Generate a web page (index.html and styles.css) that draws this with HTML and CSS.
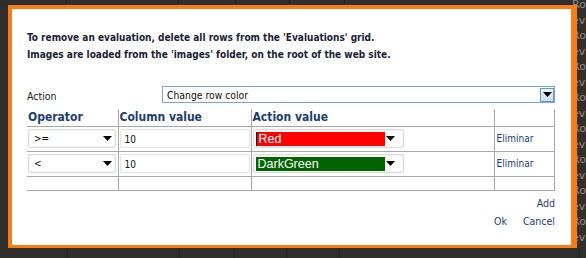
FILE: index.html
```html
<!DOCTYPE html>
<html>
<head>
<meta charset="utf-8">
<link rel="stylesheet" href="styles.css">
</head>
<body>
<div class="bg">
  <div class="bg-row top">
    <span class="bc c1"></span><span class="bc c2"></span><span class="bc c3"></span><span class="bc c4"></span><span class="bc c5"></span><span class="bc c6"></span>
  </div>
  <div class="bg-side">
    <div>Row</div><div>eva</div><div>Row</div><div>eva</div><div>Row</div><div>eva</div><div>Row</div><div>eva</div><div>Row</div><div>eva</div><div>Row</div><div>eva</div><div>Row</div><div>eva</div><div>Row</div><div>eva</div>
  </div>
  <div class="bg-row bottom">
    <span class="bc c1"></span><span class="bc c2"></span><span class="bc c3"></span><span class="bc c4"></span><span class="bc c5"></span><span class="bc c6"></span>
  </div>
</div>

<div class="dialog">
  <p class="note">To remove an evaluation, delete all rows from the 'Evaluations' grid.</p>
  <p class="note">Images are loaded from the 'images' folder, on the root of the web site.</p>

  <div class="action-row">
    <span class="label">Action</span>
    <div class="select big">
      <span class="val">Change row color</span>
      <span class="btn"><svg width="9" height="5" viewBox="0 0 9 5"><path d="M0 0H9L4.5 5Z" fill="#000"/></svg></span>
    </div>
  </div>

  <table class="grid">
    <colgroup><col class="w1"><col class="w2"><col class="w3"><col class="w4"></colgroup>
    <tr class="head"><th>Operator</th><th>Column value</th><th>Action value</th><th></th></tr>
    <tr>
      <td><div class="dd op"><span>&gt;=</span><svg width="9" height="5" viewBox="0 0 9 5"><path d="M0 0H9L4.5 5Z" fill="#000"/></svg></div></td>
      <td><div class="inp">10</div></td>
      <td><div class="dd av"><span class="sw red">Red</span><svg width="9" height="5" viewBox="0 0 9 5"><path d="M0 0H9L4.5 5Z" fill="#000"/></svg></div></td>
      <td class="del">Eliminar</td>
    </tr>
    <tr>
      <td><div class="dd op"><span>&lt;</span><svg width="9" height="5" viewBox="0 0 9 5"><path d="M0 0H9L4.5 5Z" fill="#000"/></svg></div></td>
      <td><div class="inp">10</div></td>
      <td><div class="dd av"><span class="sw green">DarkGreen</span><svg width="9" height="5" viewBox="0 0 9 5"><path d="M0 0H9L4.5 5Z" fill="#000"/></svg></div></td>
      <td class="del">Eliminar</td>
    </tr>
    <tr class="empty"><td></td><td></td><td></td><td></td></tr>
  </table>

  <div class="links add"><a>Add</a></div>
  <div class="links"><a>Ok</a><a>Cancel</a></div>
</div>
</body>
</html>
```

FILE: styles.css
```css
html, body { margin: 0; padding: 0; }
body {
  width: 586px; height: 258px; overflow: hidden;
  background: #2f2f2e;
  font-family: "DejaVu Sans Condensed", "DejaVu Sans", sans-serif;
  position: relative;
}
.bg { position: absolute; inset: 0; }
.bg-row { display: flex; }
.bg-row.top { position: absolute; top: 0; left: 0; right: 0; height: 5px; }
.bg-row.bottom { position: absolute; bottom: 0; left: 0; right: 0; height: 10px; }
.bc { border-right: 1px solid #222; box-sizing: border-box; }
.bg-row.top .bc { border-bottom: 1px solid #262626; border-radius: 0 0 3px 3px; margin-right: 3px; }
.c1 { width: 68px; } .c2 { width: 112px; } .c3 { width: 55px; } .c4 { width: 52px; } .c5 { width: 53px; } .c6 { width: 240px; }
.bg-side {
  position: absolute; left: 572px; top: -3px; white-space: nowrap;
  color: #8a8a8a; font-family: "DejaVu Sans", sans-serif; font-size: 11px; line-height: 15.5px;
}

.dialog {
  position: absolute; left: 8px; top: 5px;
  width: 528px; height: 236px;
  background: #fff;
  border: 4px solid #ff7a10; border-right-width: 6px; border-bottom-width: 3px;
  padding: 0 16px 0 15px;
  color: #1b2236;
}
.note {
  margin: 0; font-weight: bold; font-size: 10px; line-height: 17px;
}
.note:first-child { margin-top: 20px; }
.action-row { display: flex; align-items: center; margin-top: 23px; height: 17px; }
.label { font-size: 10.5px; width: 135px; color: #222; padding-top: 2px; }
.select.big {
  flex: 1; height: 15px; border: 1px solid #7fa5c7; display: flex; align-items: center; justify-content: space-between;
  font-size: 10.3px; color: #111;
}
.select .val { padding-left: 4px; }
.select .btn {
  width: 14px; height: 14px; background: linear-gradient(#eaf3fb, #c7dcef);
  display: flex; align-items: center; justify-content: center; box-sizing: border-box; border: 1px solid #6b97c1;
}
.grid {
  border-collapse: collapse; width: 527px; margin-top: 6px; table-layout: fixed;
}
.grid td, .grid th { border: 1px solid #a8a8a8; padding: 0; }
.grid tr:first-child th { border-top: none; }
.grid th:first-child, .grid td:first-child { border-left: none; }
.w1 { width: 91px; } .w2 { width: 133px; } .w3 { width: 243px; } .w4 { width: 60px; }
.head th {
  height: 16px; text-align: left; font-size: 12px; color: #1c3d6e; padding-left: 1px; font-weight: bold;
  line-height: 15px;
}
.grid tr { height: 25px; }
.grid tr.head { height: 17px; }
.grid tr.empty { height: 14px; }
.dd {
  display: flex; align-items: center; justify-content: space-between;
  height: 19px; border: 1px solid #dcdcdc; border-radius: 2px; box-sizing: border-box;
  box-shadow: inset 0 0 0 1px #f4f4f4;
}
.dd.op { margin: 0 2px 0 1px; padding: 0 3px 0 5px; font-size: 10px; color: #111; }
.dd.av { width: 151px; margin-left: 1px; padding: 0 8px 0 2px; }
.sw { display: block; width: 129px; height: 14px; line-height: 14px; font-family: "Liberation Sans", Arial, sans-serif; font-size: 12.5px; color: #fff; padding-left: 2px; box-sizing: border-box; }
.sw.red { background: #ff0000; border-left: 1px solid #000; }
.sw.green { background: #006400; }
.inp { height: 19px; margin: 0 1px; padding-left: 4px; line-height: 19px; font-size: 10px; color: #111; border: 1px solid #e3e3e3; border-radius: 2px; box-sizing: border-box; }
.del { font-size: 10px; color: #1c3d6e; padding-left: 2px !important; }
.links { display: flex; justify-content: flex-end; gap: 16px; font-size: 10.5px; color: #1c3d6e; }
.links.add { margin-top: 6px; }
.links:last-child { margin-top: 6px; }
```
